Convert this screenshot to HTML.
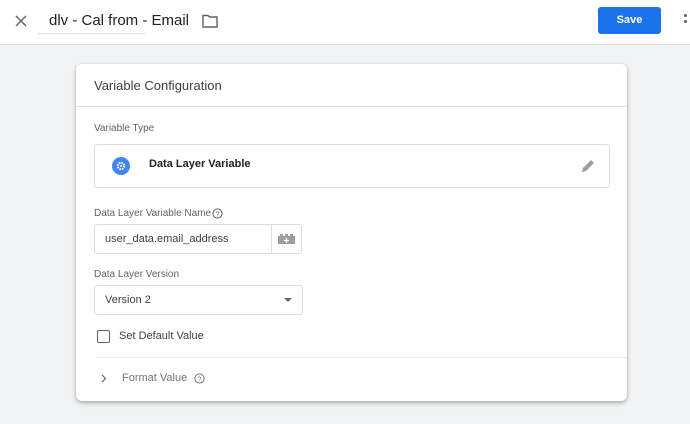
<!DOCTYPE html>
<html><head><style>
*{margin:0;padding:0;box-sizing:border-box}
body{width:690px;height:424px;background:#f1f3f4;font-family:"Liberation Sans",Arial,sans-serif;position:relative;overflow:hidden;color:#202124}
.hdr{position:absolute;left:0;top:0;width:690px;height:45px;background:#fff;border-bottom:1px solid #dadce0}
.abs{position:absolute}
.card{position:absolute;left:76px;top:64px;width:551px;height:337px;background:#fff;border-radius:6px;box-shadow:0 1px 3px rgba(0,0,0,.25),0 3px 6px rgba(0,0,0,.12)}
.lbl{position:absolute;font-size:10px;color:#5f6368}
.box{position:absolute;border:1px solid #dadce0;border-radius:3px;background:#fff}
</style></head><body>
<div class="hdr">
  <svg class="abs" style="left:15px;top:15px" width="12" height="12" viewBox="0 0 12 12"><path d="M1 1L11 11M11 1L1 11" stroke="#5f6368" stroke-width="1.4"/></svg>
  <div class="abs" style="left:49px;top:12px;font-size:15px;color:#202124">dlv - Cal from - Email</div>
  <div class="abs" style="left:37px;top:33px;width:108px;height:1px;background:#e0e0e0"></div>
  <svg class="abs" style="left:202px;top:14px" width="16" height="14" viewBox="0 0 16 14"><path d="M1 1.5h5l1.5 1.5H15v10H1z" fill="none" stroke="#5f6368" stroke-width="1.4"/></svg>
  <div class="abs" style="left:598px;top:7px;width:63px;height:27px;background:#1a73e8;border-radius:3px;color:#fff;font-size:11px;font-weight:bold;text-align:center;line-height:27px">Save</div>
  <div class="abs" style="left:684px;top:14px;width:3px;height:3px;background:#5f6368;border-radius:50%"></div>
  <div class="abs" style="left:684px;top:20px;width:3px;height:3px;background:#5f6368;border-radius:50%"></div>
</div>
<div class="card">
  <div class="abs" style="left:18px;top:14px;font-size:13px;color:#3c4043">Variable Configuration</div>
  <div class="abs" style="left:0;top:42px;width:551px;height:1px;background:#e0e0e0"></div>
  <div class="lbl" style="left:18px;top:59px">Variable Type</div>
  <div class="box" style="left:18px;top:80px;width:516px;height:44px">
    <div class="abs" style="left:17px;top:12px;width:18px;height:18px;border-radius:50%;background:#4285f4"></div>
    <svg class="abs" style="left:21px;top:16px" width="10" height="10" viewBox="0 0 10 10"><circle cx="5" cy="5" r="3.2" fill="none" stroke="#fff" stroke-width="2" stroke-dasharray="1.5 1"/><circle cx="5" cy="5" r="1" fill="#fff"/></svg>
    <div class="abs" style="left:54px;top:13px;font-size:11px;font-weight:bold;color:#202124">Data Layer Variable</div>
    <svg class="abs" style="left:486px;top:14px" width="14" height="14" viewBox="0 0 14 14"><path d="M1 13l1-4 8-8 3 3-8 8z" fill="#9e9e9e"/></svg>
  </div>
  <div class="lbl" style="left:18px;top:144px">Data Layer Variable Name</div>
  <svg class="abs" style="left:136px;top:144px" width="11" height="11" viewBox="0 0 11 11"><circle cx="5.5" cy="5.5" r="4.6" fill="none" stroke="#5f6368" stroke-width="1"/><text x="5.5" y="8.3" font-size="7" text-anchor="middle" fill="#5f6368" font-family="Liberation Sans">?</text></svg>
  <div class="box" style="left:18px;top:160px;width:208px;height:30px">
    <div class="abs" style="left:10px;top:8px;font-size:11px;color:#3c4043">user_data.email_address</div>
    <div class="abs" style="left:176px;top:0;width:1px;height:28px;background:#e0e0e0"></div>
    <svg class="abs" style="left:183px;top:9px" width="17" height="10" viewBox="0 0 17 10"><path d="M0 2h2V0h3v2h2V0h3v2h2V0h3v2h2v8H0z" fill="#9e9e9e"/><path d="M8.5 4v5M6 6.5h5" stroke="#fff" stroke-width="1.3"/></svg>
  </div>
  <div class="lbl" style="left:18px;top:205px">Data Layer Version</div>
  <div class="box" style="left:18px;top:221px;width:209px;height:30px">
    <div class="abs" style="left:10px;top:8px;font-size:11px;color:#3c4043">Version 2</div>
    <div class="abs" style="left:189px;top:12px;width:0;height:0;border-left:4px solid transparent;border-right:4px solid transparent;border-top:4px solid #5f6368"></div>
  </div>
  <div class="abs" style="left:21px;top:266px;width:13px;height:13px;border:1.5px solid #5f6368;border-radius:2px"></div>
  <div class="abs" style="left:43px;top:266px;font-size:11px;color:#3c4043">Set Default Value</div>
  <div class="abs" style="left:20px;top:293px;width:531px;height:1px;background:#e8e8e8"></div>
  <svg class="abs" style="left:25px;top:310px" width="6" height="9" viewBox="0 0 6 9"><path d="M1 1l3.5 3.5L1 8" fill="none" stroke="#5f6368" stroke-width="1.2"/></svg>
  <div class="abs" style="left:46px;top:308px;font-size:11px;color:#757575">Format Value</div>
  <svg class="abs" style="left:118px;top:309px" width="11" height="11" viewBox="0 0 11 11"><circle cx="5.5" cy="5.5" r="4.6" fill="none" stroke="#757575" stroke-width="1"/><text x="5.5" y="8.3" font-size="7" text-anchor="middle" fill="#757575" font-family="Liberation Sans">?</text></svg>
</div>
</body></html>
